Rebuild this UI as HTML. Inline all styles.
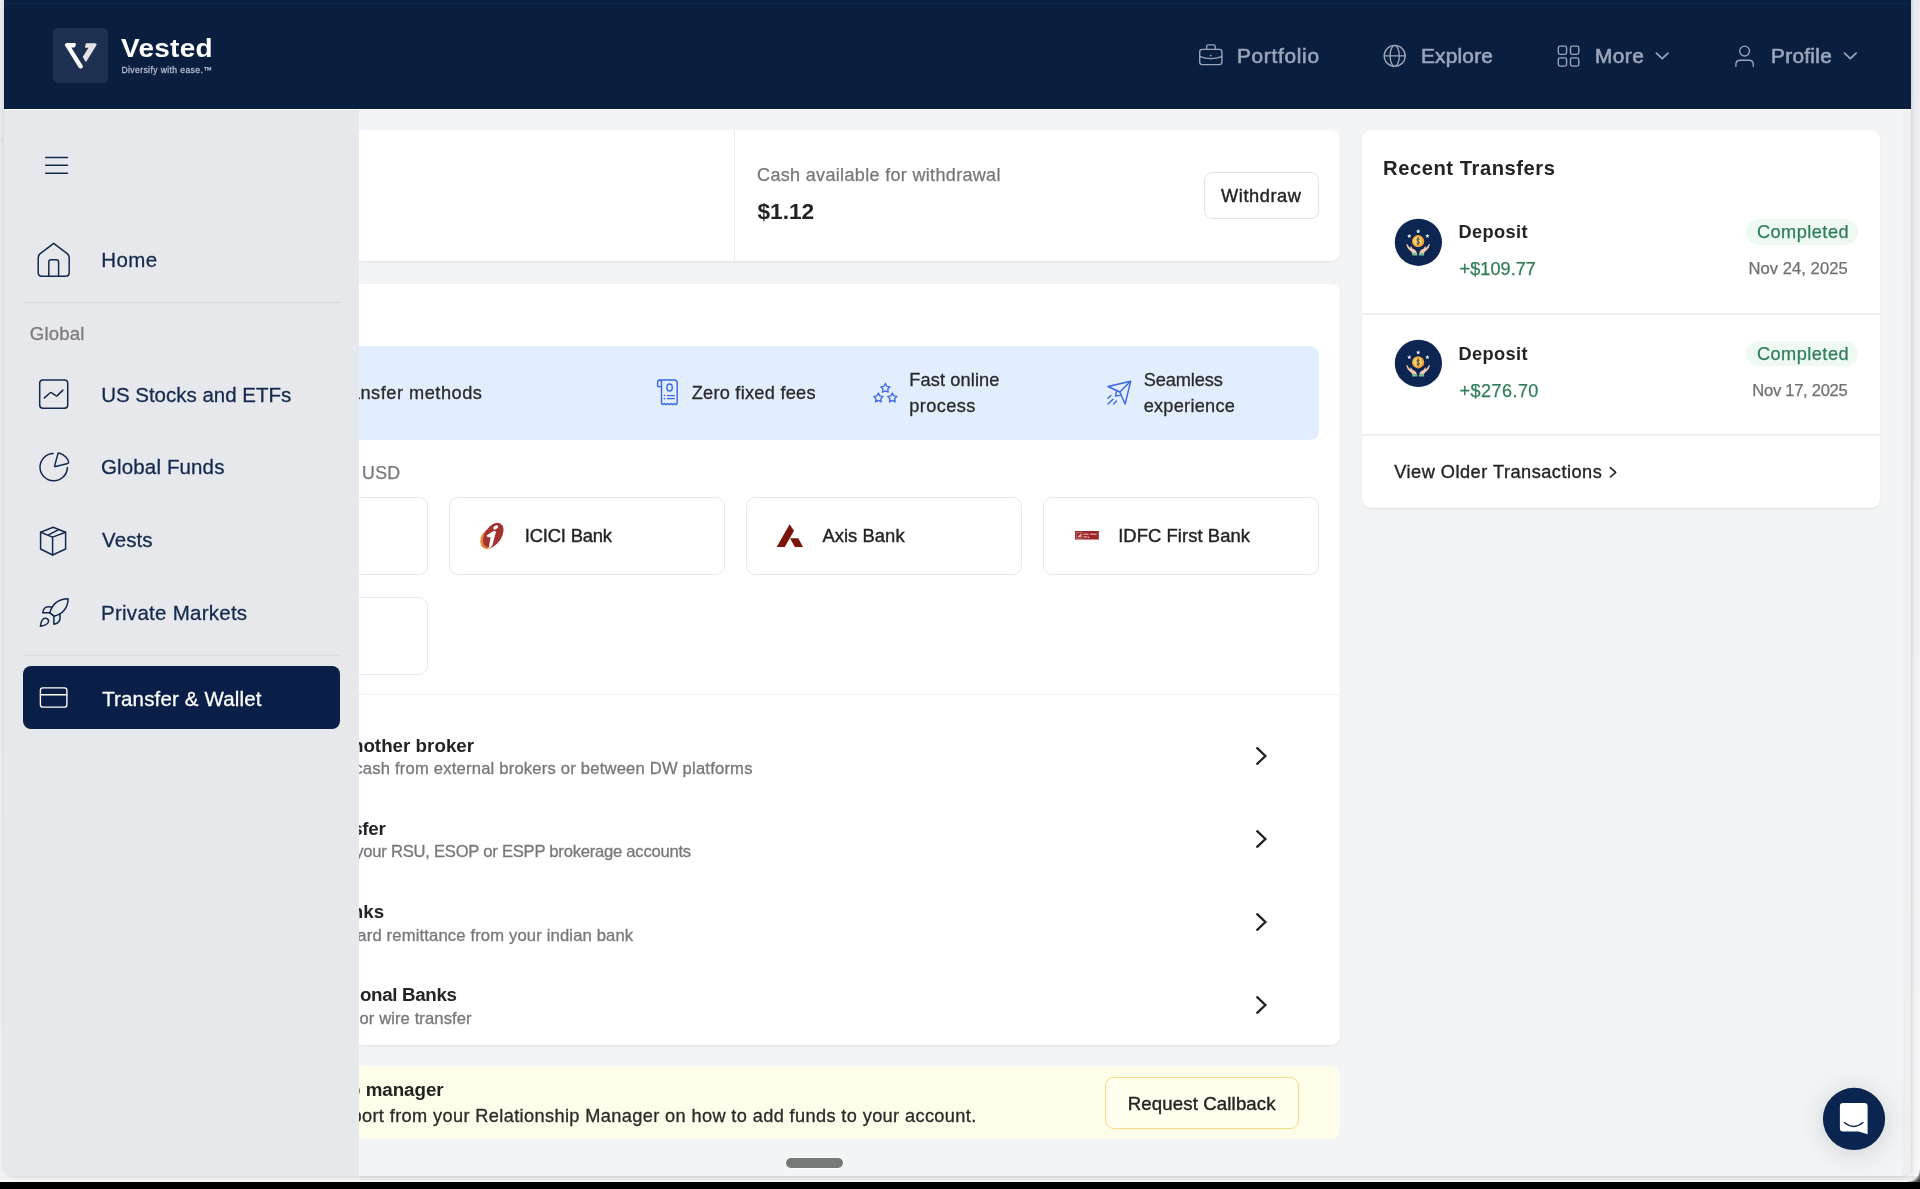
<!DOCTYPE html><html><head><meta charset="utf-8"><title>Vested</title><style>
*{margin:0;padding:0;box-sizing:border-box}
html,body{width:1920px;height:1189px;overflow:hidden;background:#f0f1f3;font-family:"Liberation Sans",sans-serif;}
.a{position:absolute}
.t{position:absolute;white-space:nowrap;display:block}
#win{position:absolute;left:4px;top:0;width:1907px;height:1176px;background:#f3f4f6;border-radius:0 0 10px 10px;overflow:hidden;box-shadow:0 0 5px rgba(0,0,0,.13)}
#abs{position:absolute;left:-4px;top:0;width:1920px;height:1189px;will-change:transform}
#hdr{left:4px;top:0;width:1907px;height:108.5px;background:#0a1f40}
#side{left:4px;top:109.5px;width:355px;height:1066.5px;background:#e7e8ec}
.card{background:#fff;border-radius:9px;box-shadow:0 1px 2px rgba(0,0,0,.08)}
.bank{border:1.5px solid #e9e9e9;border-radius:9px;background:#fff;height:78px;width:276px}

.ln{position:absolute;background:#ececec;height:1px}
</style></head><body>
<div class="a" style="left:0;top:0;width:1920px;height:1182px;background:linear-gradient(90deg,#f3f4f6 0,#f3f4f6 1911px,#e4e6ea 1911px,#f1f2f5 1915px,#f5f6f8 1920px)"></div>
<div class="a" style="left:0;top:0;width:4px;height:1182px;background:linear-gradient(180deg,#e9ebee 0,#eaecf0 50%,#f2f3f6 100%)"></div>
<div class="a" style="left:1911px;top:0;width:9px;height:1182px;background:linear-gradient(180deg,rgba(225,228,232,.55) 0,rgba(232,234,238,.3) 50%,rgba(255,255,255,.25) 100%)"></div>
<div class="a" style="left:0;top:139px;width:4px;height:1px;background:#dcdde0"></div>
<div class="a" style="left:0;top:1176px;width:1920px;height:6px;background:linear-gradient(180deg,#e3e4e4 0,#ececec 4px,#f8f8f8 5px,#fdfdfd 6px)"></div>
<div class="a" style="left:0;top:1176px;width:360px;height:6px;background:linear-gradient(180deg,#ebecee 0,#f3f4f6 3px,#fafafb 6px)"></div>
<div class="a" style="left:1908px;top:1170px;width:12px;height:12px;background:radial-gradient(circle at 0 0,rgba(0,0,0,0) 0,rgba(0,0,0,0) 11px,#8a8a8a 12.5px,#444 15px)"></div>
<div class="a" style="left:0;top:1182px;width:1920px;height:7px;background:#000"></div>
<div id="win"><div id="abs">
<div class="a card" style="left:130px;top:130px;width:1210px;height:131px"></div>
<div class="a" style="left:734px;top:130px;width:1px;height:131px;background:#ececec"></div>
<div class="a" style="left:1204px;top:171.5px;width:115px;height:47px;border:1.5px solid #e4e4e4;border-radius:8px;background:#fff"></div>
<div class="a card" style="left:130px;top:283.5px;width:1210px;height:761px"></div>
<div class="a" style="left:151.5px;top:345.5px;width:1167.3px;height:94px;border-radius:9px;background:#e2edfd"></div>
<div class="a bank" style="left:151.5px;top:497px"></div>
<div class="a bank" style="left:448.5px;top:497px"></div>
<div class="a bank" style="left:745.5px;top:497px"></div>
<div class="a bank" style="left:1042.5px;top:497px"></div>
<div class="a bank" style="left:151.5px;top:596.5px"></div>
<div class="a" style="left:130px;top:694px;width:1210px;height:0;border-top:1.5px dotted #e6e6e6"></div>
<svg class="a" style="left:1250px;top:743.8px" width="24" height="24" viewBox="0 0 24 24"><path d="M7.2 4.2 L15.4 12 L7.2 19.8" fill="none" stroke="#222" stroke-width="2.3" stroke-linecap="round" stroke-linejoin="miter"/></svg>
<svg class="a" style="left:1250px;top:827.0px" width="24" height="24" viewBox="0 0 24 24"><path d="M7.2 4.2 L15.4 12 L7.2 19.8" fill="none" stroke="#222" stroke-width="2.3" stroke-linecap="round" stroke-linejoin="miter"/></svg>
<svg class="a" style="left:1250px;top:910.2px" width="24" height="24" viewBox="0 0 24 24"><path d="M7.2 4.2 L15.4 12 L7.2 19.8" fill="none" stroke="#222" stroke-width="2.3" stroke-linecap="round" stroke-linejoin="miter"/></svg>
<svg class="a" style="left:1250px;top:993.4px" width="24" height="24" viewBox="0 0 24 24"><path d="M7.2 4.2 L15.4 12 L7.2 19.8" fill="none" stroke="#222" stroke-width="2.3" stroke-linecap="round" stroke-linejoin="miter"/></svg>
<div class="a" style="left:130px;top:1066.3px;width:1210px;height:72.7px;border-radius:9px;background:#fefdea"></div>
<div class="a" style="left:1105.3px;top:1077px;width:193.7px;height:51.7px;border:1.5px solid #f5dc85;border-radius:9px;background:#fffeef"></div>
<svg class="a" style="left:640px;top:370px;overflow:visible" width="500" height="190" viewBox="640 370 500 190" >
<g fill="none" stroke="#3d68e4" stroke-width="1.45" stroke-linecap="round" stroke-linejoin="round">
<!-- receipt -->
<path d="M661.5 386.6 V402.6 Q661.5 404.4 662.9 404.5 L664.2 403.6 L665.9 404.7 L667.6 403.6 L669.3 404.7 L671 403.6 L672.7 404.7 L674.4 403.6 L676 404.6 Q677.2 404.4 677.2 402.6 V383 Q677.2 380 674.2 380 H660 Q657.6 380 657.6 382.4 V386.6 H661.5 V382.6 Q661.5 380 659.6 380"/>
<ellipse cx="669.6" cy="387.5" rx="2.7" ry="3.5"/>
<path d="M667.4 395.6 H674.4 M667.4 398.7 H674.4" stroke-width="1.3"/>
<path d="M664.3 395.6 H664.6 M664.3 398.7 H664.6" stroke-width="1.5"/>
<!-- stars -->
<path d="M885.40 383.45 L886.87 386.28 L890.01 386.80 L887.78 389.07 L888.25 392.22 L885.40 390.80 L882.55 392.22 L883.02 389.07 L880.79 386.80 L883.93 386.28 Z M878.40 393.05 L879.87 395.88 L883.01 396.40 L880.78 398.67 L881.25 401.82 L878.40 400.40 L875.55 401.82 L876.02 398.67 L873.79 396.40 L876.93 395.88 Z M892.30 393.05 L893.77 395.88 L896.91 396.40 L894.68 398.67 L895.15 401.82 L892.30 400.40 L889.45 401.82 L889.92 398.67 L887.69 396.40 L890.83 395.88 Z" stroke-width="1.3" stroke-linejoin="round"/>
<!-- plane -->
<path d="M1130.7 381.2 L1108 386.5 L1119.8 392 L1125.1 404 Z" stroke-linejoin="round"/>
<path d="M1130.4 381.5 L1119.8 392"/>
<path d="M1116.6 390.6 L1115.6 396.1 L1121 395.1" />
<path d="M1108 398.2 L1110.9 395.4 M1108 404.1 L1113 399.2 M1113.6 403.9 L1116.5 401"/>
</g>
<!-- ICICI -->
<g transform="rotate(33 492 536)">
<ellipse cx="491.4" cy="539.6" rx="8.5" ry="11.0" fill="#e8853a"/>
<ellipse cx="492.6" cy="534.6" rx="8.5" ry="13.6" fill="#a23331"/>
</g>
<ellipse cx="495.7" cy="527.4" rx="2.7" ry="1.75" fill="#ffffff" transform="rotate(-35 495.7 527.4)"/>
<path d="M486.4 535.4 L493.2 531.2 Q494.6 530.6 496.0 531.7 L492.3 545.6 L488.4 549.6 L490.6 537.3 Q489.4 536.6 488.0 537.5 Z" fill="#ffffff"/>
<!-- Axis -->
<path d="M789.6 524.2 L794 530.8 L784.8 547 L776.7 547 Z" fill="#7b1409"/>
<path d="M790 538.2 L798.3 538.2 L803 547 L794.9 547 Z" fill="#7b1409"/>
<!-- IDFC -->
<rect x="1075" y="531" width="23.8" height="8.5" fill="#9c2528"/>
<rect x="1076.4" y="532.3" width="5.6" height="5.9" fill="none" stroke="#c9817f" stroke-width="0.7"/>
<path d="M1077.6 537 L1081 533.4 L1081 537 Z" fill="#e9c9c0"/>
<rect x="1083.5" y="533.6" width="5.2" height="1.3" fill="#d9a5a2"/>
<rect x="1090" y="533.6" width="6.6" height="1.3" fill="#d9a5a2"/>
<rect x="1083.5" y="536.3" width="4" height="1.3" fill="#d9a5a2"/>
<circle cx="1088.6" cy="537.2" r="0.7" fill="#f3d7b0"/>
</svg>
<span class="t" style="left:757.12px;top:165px;font-size:18.0px;line-height:20px;color:#777777;letter-spacing:0.33px;-webkit-text-stroke:0.25px #777777;">Cash available for withdrawal</span>
<span class="t" style="left:757.4px;top:198px;font-size:22.7px;line-height:26px;color:#232323;font-weight:700;letter-spacing:0.011px;">$1.12</span>
<span class="t" style="left:1221.1px;top:186px;font-size:18.2px;line-height:20px;color:#232323;letter-spacing:0.563px;-webkit-text-stroke:0.4px #232323;">Withdraw</span>
<span class="t" style="left:265.25px;top:383px;font-size:18.2px;line-height:20px;color:#2a2a2a;letter-spacing:0.521px;-webkit-text-stroke:0.3px #2a2a2a;">Multiple transfer methods</span>
<span class="t" style="left:691.65px;top:383px;font-size:18.2px;line-height:20px;color:#2a2a2a;letter-spacing:0.257px;-webkit-text-stroke:0.3px #2a2a2a;">Zero fixed fees</span>
<span class="t" style="left:909.35px;top:370px;font-size:18.2px;line-height:20px;color:#2a2a2a;letter-spacing:0.115px;-webkit-text-stroke:0.3px #2a2a2a;">Fast online</span>
<span class="t" style="left:909.35px;top:396px;font-size:18.2px;line-height:20px;color:#2a2a2a;letter-spacing:0.402px;-webkit-text-stroke:0.3px #2a2a2a;">process</span>
<span class="t" style="left:1143.65px;top:370px;font-size:18.2px;line-height:20px;color:#2a2a2a;letter-spacing:-0.08px;-webkit-text-stroke:0.3px #2a2a2a;">Seamless</span>
<span class="t" style="left:1143.65px;top:396px;font-size:18.2px;line-height:20px;color:#2a2a2a;letter-spacing:0.26px;-webkit-text-stroke:0.3px #2a2a2a;">experience</span>
<span class="t" style="left:362.12px;top:463px;font-size:17.8px;line-height:20px;color:#777777;letter-spacing:0.274px;-webkit-text-stroke:0.25px #777777;">USD</span>
<span class="t" style="left:524.8px;top:525px;font-size:18.4px;line-height:21px;color:#232323;letter-spacing:-0.191px;-webkit-text-stroke:0.4px #232323;">ICICI Bank</span>
<span class="t" style="left:822.4px;top:525px;font-size:18.4px;line-height:21px;color:#232323;letter-spacing:0.053px;-webkit-text-stroke:0.4px #232323;">Axis Bank</span>
<span class="t" style="left:1118.2px;top:525px;font-size:18.4px;line-height:21px;color:#232323;letter-spacing:0.072px;-webkit-text-stroke:0.4px #232323;">IDFC First Bank</span>
<span class="t" style="left:215.07px;top:735px;font-size:18.75px;line-height:21px;color:#232323;font-weight:700;letter-spacing:0.023px;">Transfer from another broker</span>
<span class="t" style="left:213.76px;top:759px;font-size:16.6px;line-height:19px;color:#777777;letter-spacing:0.201px;-webkit-text-stroke:0.3px #777777;">Transfer stocks or cash from external brokers or between DW platforms</span>
<span class="t" style="left:214.57px;top:818px;font-size:18.75px;line-height:21px;color:#232323;font-weight:700;letter-spacing:-0.286px;">RSU/ESOP Transfer</span>
<span class="t" style="left:254.87px;top:842px;font-size:16.6px;line-height:19px;color:#777777;letter-spacing:-0.232px;-webkit-text-stroke:0.3px #777777;">Transfer from your RSU, ESOP or ESPP brokerage accounts</span>
<span class="t" style="left:266.74px;top:901px;font-size:18.75px;line-height:21px;color:#232323;font-weight:700;letter-spacing:0.072px;">Indian Banks</span>
<span class="t" style="left:318.0px;top:926px;font-size:16.6px;line-height:19px;color:#777777;letter-spacing:0.158px;-webkit-text-stroke:0.3px #777777;">Outward remittance from your indian bank</span>
<span class="t" style="left:289.14px;top:984px;font-size:18.75px;line-height:21px;color:#232323;font-weight:700;letter-spacing:-0.345px;">International Banks</span>
<span class="t" style="left:319.48px;top:1009px;font-size:16.6px;line-height:19px;color:#777777;letter-spacing:0.095px;-webkit-text-stroke:0.3px #777777;">ACH or wire transfer</span>
<span class="t" style="left:145.28px;top:1079px;font-size:18.75px;line-height:21px;color:#232323;font-weight:700;letter-spacing:-0.044px;">Talk to your relationship manager</span>
<span class="t" style="left:285.18px;top:1106px;font-size:18.2px;line-height:20px;color:#2a2a2a;letter-spacing:0.371px;-webkit-text-stroke:0.3px #2a2a2a;">Get support from your Relationship Manager on how to add funds to your account.</span>
<span class="t" style="left:1127.7px;top:1093px;font-size:18.6px;line-height:21px;color:#232323;letter-spacing:0.145px;-webkit-text-stroke:0.4px #232323;">Request Callback</span>
<div class="a card" style="left:1362px;top:130px;width:517.5px;height:378px"></div>
<div class="a" style="left:1362px;top:313.3px;width:517.5px;height:1.3px;background:#efefef"></div>
<div class="a" style="left:1362px;top:434.3px;width:517.5px;height:1.3px;background:#efefef"></div>
<div class="a" style="left:1745.5px;top:219px;width:112.8px;height:25.8px;border-radius:13px;background:#eefaf1"></div>
<div class="a" style="left:1745.5px;top:340.5px;width:112.8px;height:25.8px;border-radius:13px;background:#eefaf1"></div>
<svg class="a" style="left:1390px;top:215px;overflow:visible" width="240" height="270" viewBox="1390 215 240 270" ><g transform="translate(0.00 0.00)">
<circle cx="1418.4" cy="242.3" r="23.6" fill="#0c2551"/>
<path d="M1418.20 229.10 L1418.79 230.59 L1420.39 230.69 L1419.15 231.71 L1419.55 233.26 L1418.20 232.40 L1416.85 233.26 L1417.25 231.71 L1416.01 230.69 L1417.61 230.59 Z M1409.30 233.80 L1409.89 235.29 L1411.49 235.39 L1410.25 236.41 L1410.65 237.96 L1409.30 237.10 L1407.95 237.96 L1408.35 236.41 L1407.11 235.39 L1408.71 235.29 Z M1427.40 233.80 L1427.99 235.29 L1429.59 235.39 L1428.35 236.41 L1428.75 237.96 L1427.40 237.10 L1426.05 237.96 L1426.45 236.41 L1425.21 235.39 L1426.81 235.29 Z" fill="#f4f6fb"/>
<circle cx="1418.1" cy="241.2" r="6.1" fill="#f2a13a"/>
<circle cx="1417.7" cy="241.0" r="4.4" fill="#f7d25f"/>
<path d="M1419.3 239.2 Q1418 238.1 1417 239.2 Q1416.4 240.5 1418.2 241.2 Q1420 242 1419.2 243.3 Q1418 244.3 1416.8 243.2 M1418.1 237.6 V244.9" fill="none" stroke="#3b3a55" stroke-width="0.9" stroke-linecap="round"/>
<path d="M1406.2 244.0 Q1407.2 243.6 1407.8 244.8 Q1409 247.2 1410.6 248.3 L1410.4 246.6 Q1411 246 1411.6 246.8 L1412.4 248.6 Q1416.2 250 1416.9 253.2 L1412.4 253.4 Q1411.6 251.4 1409.8 250.4 Q1406.8 248 1406.2 244.0 Z" fill="#f3c9b4"/>
<path d="M1430.0 244.0 Q1429 243.6 1428.4 244.8 Q1427.2 247.2 1425.6 248.3 L1425.8 246.6 Q1425.2 246 1424.6 246.8 L1423.8 248.6 Q1420 250 1419.3 253.2 L1423.8 253.4 Q1424.6 251.4 1426.4 250.4 Q1429.4 248 1430.0 244.0 Z" fill="#f3c9b4"/>
<rect x="1412.2" y="253.1" width="5.1" height="2.3" rx="0.5" fill="#7dbf97"/>
<rect x="1419.0" y="253.1" width="5.1" height="2.3" rx="0.5" fill="#7dbf97"/>
</g><g transform="translate(0.00 121.10)">
<circle cx="1418.4" cy="242.3" r="23.6" fill="#0c2551"/>
<path d="M1418.20 229.10 L1418.79 230.59 L1420.39 230.69 L1419.15 231.71 L1419.55 233.26 L1418.20 232.40 L1416.85 233.26 L1417.25 231.71 L1416.01 230.69 L1417.61 230.59 Z M1409.30 233.80 L1409.89 235.29 L1411.49 235.39 L1410.25 236.41 L1410.65 237.96 L1409.30 237.10 L1407.95 237.96 L1408.35 236.41 L1407.11 235.39 L1408.71 235.29 Z M1427.40 233.80 L1427.99 235.29 L1429.59 235.39 L1428.35 236.41 L1428.75 237.96 L1427.40 237.10 L1426.05 237.96 L1426.45 236.41 L1425.21 235.39 L1426.81 235.29 Z" fill="#f4f6fb"/>
<circle cx="1418.1" cy="241.2" r="6.1" fill="#f2a13a"/>
<circle cx="1417.7" cy="241.0" r="4.4" fill="#f7d25f"/>
<path d="M1419.3 239.2 Q1418 238.1 1417 239.2 Q1416.4 240.5 1418.2 241.2 Q1420 242 1419.2 243.3 Q1418 244.3 1416.8 243.2 M1418.1 237.6 V244.9" fill="none" stroke="#3b3a55" stroke-width="0.9" stroke-linecap="round"/>
<path d="M1406.2 244.0 Q1407.2 243.6 1407.8 244.8 Q1409 247.2 1410.6 248.3 L1410.4 246.6 Q1411 246 1411.6 246.8 L1412.4 248.6 Q1416.2 250 1416.9 253.2 L1412.4 253.4 Q1411.6 251.4 1409.8 250.4 Q1406.8 248 1406.2 244.0 Z" fill="#f3c9b4"/>
<path d="M1430.0 244.0 Q1429 243.6 1428.4 244.8 Q1427.2 247.2 1425.6 248.3 L1425.8 246.6 Q1425.2 246 1424.6 246.8 L1423.8 248.6 Q1420 250 1419.3 253.2 L1423.8 253.4 Q1424.6 251.4 1426.4 250.4 Q1429.4 248 1430.0 244.0 Z" fill="#f3c9b4"/>
<rect x="1412.2" y="253.1" width="5.1" height="2.3" rx="0.5" fill="#7dbf97"/>
<rect x="1419.0" y="253.1" width="5.1" height="2.3" rx="0.5" fill="#7dbf97"/>
</g>
<path d="M1610.3 467.6 L1615.7 472.3 L1610.3 477" fill="none" stroke="#232323" stroke-width="1.6" stroke-linecap="round" stroke-linejoin="round"/>
</svg>
<span class="t" style="left:1383.1px;top:157px;font-size:20.2px;line-height:22px;color:#232323;font-weight:700;letter-spacing:0.534px;">Recent Transfers</span>
<span class="t" style="left:1458.4px;top:222px;font-size:18.2px;line-height:20px;color:#232323;font-weight:700;letter-spacing:0.427px;">Deposit</span>
<span class="t" style="left:1459.53px;top:259px;font-size:18.0px;line-height:20px;color:#2f7d57;letter-spacing:0.112px;-webkit-text-stroke:0.25px #2f7d57;">+$109.77</span>
<span class="t" style="left:1756.92px;top:222px;font-size:18.2px;line-height:20px;color:#2f7d57;letter-spacing:0.464px;-webkit-text-stroke:0.25px #2f7d57;">Completed</span>
<span class="t" style="left:1748.42px;top:259px;font-size:16.6px;line-height:19px;color:#707070;letter-spacing:0.052px;-webkit-text-stroke:0.25px #707070;">Nov 24, 2025</span>
<span class="t" style="left:1458.4px;top:344px;font-size:18.2px;line-height:20px;color:#232323;font-weight:700;letter-spacing:0.427px;">Deposit</span>
<span class="t" style="left:1459.53px;top:381px;font-size:18.0px;line-height:20px;color:#2f7d57;letter-spacing:0.469px;-webkit-text-stroke:0.25px #2f7d57;">+$276.70</span>
<span class="t" style="left:1756.92px;top:344px;font-size:18.2px;line-height:20px;color:#2f7d57;letter-spacing:0.464px;-webkit-text-stroke:0.25px #2f7d57;">Completed</span>
<span class="t" style="left:1752.33px;top:381px;font-size:16.6px;line-height:19px;color:#707070;letter-spacing:-0.303px;-webkit-text-stroke:0.25px #707070;">Nov 17, 2025</span>
<span class="t" style="left:1394.27px;top:462px;font-size:18.2px;line-height:20px;color:#232323;letter-spacing:0.488px;-webkit-text-stroke:0.35px #232323;">View Older Transactions</span>
<div class="a" style="left:1901.5px;top:108px;width:9.5px;height:1068px;background:#efefef"></div>
<div id="side" class="a"></div>
<div class="a" style="left:22.5px;top:301.5px;width:317.5px;height:1.5px;background:#d6d9e3"></div>
<div class="a" style="left:22.5px;top:655px;width:317.5px;height:1.2px;background:#dadce2"></div>
<div class="a" style="left:22.5px;top:666.3px;width:317.2px;height:62.7px;border-radius:8px;background:#0a1f47"></div>
<svg class="a" style="left:30px;top:150px;overflow:visible" width="50" height="570" viewBox="30 150 50 570" >
<g fill="none" stroke="#14294f" stroke-width="1.5" stroke-linecap="round" stroke-linejoin="round">
<!-- hamburger -->
<path d="M45.7 157.4 H67.5 M45.7 165.3 H67.5 M45.7 173.2 H67.5"/>
<!-- home -->
<path d="M53.7 243.3 L40.2 253.6 Q38.2 255.3 38.2 258 V272.4 Q38.2 276.2 42 276.2 H65.4 Q69.2 276.2 69.2 272.4 V258 Q69.2 255.3 67.2 253.6 Z"/>
<path d="M48.8 276 V262 Q48.8 259.8 51 259.8 H56.4 Q58.6 259.8 58.6 262 V276"/>
<!-- stocks -->
<rect x="39.7" y="379.9" width="28" height="28.3" rx="3.2"/>
<path d="M44.4 397.9 L50.2 392.8 Q50.9 392.2 51.7 392.8 L55.8 395.7 Q56.6 396.2 57.3 395.6 L62.9 390.1"/>
<!-- pie -->
<path d="M53.2 453.4 A13.7 13.7 0 1 0 67.4 467.6"/>
<path d="M58.9 452.9 Q63.2 453.9 66.1 457.3 Q68.1 459.6 68.6 462.1 Q68.8 463.1 67.8 463.4 L55.6 466.6 Q54.4 466.8 54.7 465.6 L58 453.5 Q58.2 452.8 58.9 452.9 Z"/>
<!-- cube -->
<path d="M53.1 527.3 L65.6 532.3 V549 L52.6 555 L40.6 549 V532.3 Z"/>
<path d="M40.6 532.3 L52.6 537.1 L65.6 532.3 M52.6 537.1 V555 M48 535.1 L58.6 529.6"/>
<!-- rocket -->
<path d="M49.8 612.7 C52.5 603 58.5 598.9 68.1 598.7 C67.9 608.3 63.6 613.5 54 616.3 Z"/>
<path d="M49.8 612.7 L54 616.3"/>
<path d="M49.6 612.8 H42.6 C43.4 608 45.6 605.6 52.2 607.2"/>
<path d="M53.9 616.4 V624.2 C58.7 623.3 61.1 620.6 59.8 614.1"/>
<path d="M40.4 626.2 C41 621 42.6 618 45.5 618.2 C47.8 618.4 49.1 620.2 48.3 622.2 C47.3 624.5 44.6 625.6 40.4 626.2 Z"/>
</g>
<!-- card (active) -->
<g fill="none" stroke="#ffffff" stroke-width="1.35" stroke-linecap="round" stroke-linejoin="round">
<rect x="40.4" y="687.9" width="26.5" height="19.2" rx="2.4"/>
<path d="M40.4 694.7 H66.9"/>
</g>
</svg>
<span class="t" style="left:101.14px;top:248px;font-size:20.5px;line-height:23px;color:#14294f;letter-spacing:0.479px;-webkit-text-stroke:0.28px #14294f;">Home</span>
<span class="t" style="left:29.85px;top:323px;font-size:18.5px;line-height:21px;color:#7d7d7d;letter-spacing:0.187px;-webkit-text-stroke:0.3px #7d7d7d;">Global</span>
<span class="t" style="left:101.14px;top:383px;font-size:20.5px;line-height:23px;color:#14294f;letter-spacing:-0.011px;-webkit-text-stroke:0.28px #14294f;">US Stocks and ETFs</span>
<span class="t" style="left:101.04px;top:455px;font-size:20.5px;line-height:23px;color:#14294f;letter-spacing:0.131px;-webkit-text-stroke:0.28px #14294f;">Global Funds</span>
<span class="t" style="left:102.04px;top:528px;font-size:20.5px;line-height:23px;color:#14294f;letter-spacing:0.108px;-webkit-text-stroke:0.28px #14294f;">Vests</span>
<span class="t" style="left:101.04px;top:601px;font-size:20.5px;line-height:23px;color:#14294f;letter-spacing:0.262px;-webkit-text-stroke:0.28px #14294f;">Private Markets</span>
<span class="t" style="left:102.14px;top:687px;font-size:20.5px;line-height:23px;color:#ffffff;letter-spacing:0.162px;-webkit-text-stroke:0.28px #ffffff;">Transfer &amp; Wallet</span>
<div id="hdr" class="a"></div>
<div class="a" style="left:4px;top:3px;width:1907px;height:1px;background:#0c2850"></div>
<div class="a" style="left:4px;top:108.5px;width:1907px;height:1.2px;background:#fdfdfe"></div>
<div class="a" style="left:53px;top:28px;width:54.5px;height:54.5px;border-radius:5px;background:#1e3051"></div>
<svg class="a" style="left:53px;top:28px;overflow:visible" width="55" height="55" viewBox="53 28 55 55" >
<path d="M64.7 45 Q65.2 43.1 67.1 43.1 L74.4 43.1 Q76.4 43.1 75.9 44.9 L75.2 46.6 Q74.9 47.5 73.9 47.5 L71.3 47.5 L82.6 65.4 Q83.6 67.3 81.8 68.3 Q80 69.2 78.7 67.6 Z" fill="#ffffff"/>
<path d="M85.9 43.3 L95.2 43.3 Q97.2 43.3 96.4 45.2 L86.4 61.5 Q85.9 62.1 85.4 61.4 L83.0 57.4 Q82.7 56.9 83.0 56.4 L88.4 47.7 L85.6 47.7 Q84.9 47.7 85.0 47 Z" fill="#e2e2e4"/>
</svg>
<svg class="a" style="left:1190px;top:40px;overflow:visible" width="680" height="32" viewBox="1190 40 680 32" >
<g fill="none" stroke="#9ca5b9" stroke-width="1.35" stroke-linecap="round" stroke-linejoin="round">
<!-- briefcase -->
<rect x="1199.7" y="49.4" width="22.2" height="15.2" rx="2.6"/>
<path d="M1206.6 49.2 V46.6 Q1206.6 44.8 1208.4 44.8 H1213.4 Q1215.2 44.8 1215.2 46.6 V49.2"/>
<path d="M1199.9 56.6 Q1210.8 60.6 1221.7 56.6"/>
<!-- globe -->
<circle cx="1394.7" cy="55.9" r="10.5"/>
<ellipse cx="1394.7" cy="55.9" rx="4.6" ry="10.5"/>
<path d="M1384.4 55.9 H1405"/>
<!-- grid -->
<rect x="1558.3" y="46.1" width="8.3" height="8.3" rx="1.8"/>
<rect x="1570.5" y="46.1" width="8.3" height="8.3" rx="1.8"/>
<rect x="1558.3" y="57.8" width="8.3" height="8.3" rx="1.8"/>
<rect x="1570.5" y="57.8" width="8.3" height="8.3" rx="1.8"/>
<!-- user -->
<circle cx="1744.6" cy="51.1" r="4.9"/>
<path d="M1735.9 66.4 V64.4 Q1735.9 60.2 1740.3 60.2 H1748.9 Q1753.3 60.2 1753.3 64.4 V66.4"/>
</g>
<circle cx="1210.7" cy="55.6" r="0.9" fill="#9ca5b9"/>
<g fill="none" stroke="#9ca5b9" stroke-width="1.7" stroke-linecap="round" stroke-linejoin="round">
<path d="M1656.4 53.2 L1662.2 58.7 L1668 53.2"/>
<path d="M1844.5 53.2 L1850.3 58.7 L1856.1 53.2"/>
</g>
</svg>
<span class="t" style="left:121.3px;top:33px;font-size:26px;line-height:30px;color:#ffffff;font-weight:700;letter-spacing:0.267px;transform:scaleX(1.075);transform-origin:0 0;">Vested</span>
<span class="t" style="left:121.45px;top:65px;font-size:8.6px;line-height:10px;color:#b3bacb;letter-spacing:0.389px;-webkit-text-stroke:0.3px #b3bacb;">Diversify with ease.™</span>
<span class="t" style="left:1236.87px;top:45px;font-size:20px;line-height:22px;color:#9ca5b9;letter-spacing:0.678px;transform:scaleX(1.04);transform-origin:0 0;-webkit-text-stroke:0.6px #9ca5b9;">Portfolio</span>
<span class="t" style="left:1420.97px;top:45px;font-size:20px;line-height:22px;color:#9ca5b9;letter-spacing:0.211px;transform:scaleX(1.04);transform-origin:0 0;-webkit-text-stroke:0.6px #9ca5b9;">Explore</span>
<span class="t" style="left:1595.07px;top:45px;font-size:20px;line-height:22px;color:#9ca5b9;letter-spacing:0.466px;transform:scaleX(1.04);transform-origin:0 0;-webkit-text-stroke:0.6px #9ca5b9;">More</span>
<span class="t" style="left:1771.27px;top:45px;font-size:20px;line-height:22px;color:#9ca5b9;letter-spacing:0.286px;transform:scaleX(1.04);transform-origin:0 0;-webkit-text-stroke:0.6px #9ca5b9;">Profile</span>
<svg class="a" style="left:1815px;top:1080px;overflow:visible" width="80" height="80" viewBox="1815 1080 80 80" >
<circle cx="1854" cy="1118.9" r="31.1" fill="#0b2551" style="filter:drop-shadow(0 3px 14px rgba(0,0,0,.15))"/>
<path d="M1843.1 1102.9 H1864.4 Q1867.6 1102.9 1867.6 1106.1 V1134.3 L1858.6 1131.5 H1843.1 Q1839.9 1131.5 1839.9 1128.3 V1106.1 Q1839.9 1102.9 1843.1 1102.9 Z" fill="#ffffff"/>
<path d="M1844.3 1122.6 Q1853.7 1130.4 1863.1 1122.6" fill="none" stroke="#0b2551" stroke-width="1.35" stroke-linecap="round"/>
</svg>
<div class="a" style="left:786px;top:1158px;width:56.5px;height:10px;border-radius:5px;background:#777979;box-shadow:0 0 0 1px rgba(255,255,255,.7)"></div>
</div></div>
</body></html>
